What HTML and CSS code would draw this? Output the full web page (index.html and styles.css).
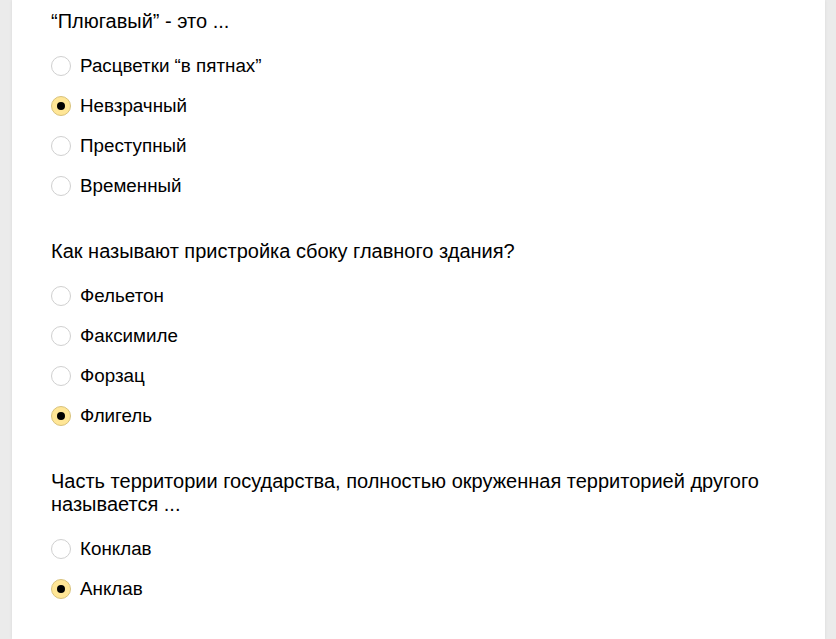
FILE: index.html
```html
<!DOCTYPE html>
<html lang="ru">
<head>
    <meta charset="UTF-8">
    <meta name="viewport" content="width=device-width, initial-scale=1.0">
    <title>Тест</title>
    <link rel="stylesheet" href="styles.css">
</head>
<body>
    <div class="card">
        <div class="question">
            <div class="question-title">“Плюгавый” - это ...</div>
            <label class="option"><span class="radio"></span>Расцветки “в пятнах”</label>
            <label class="option"><span class="radio checked"></span>Невзрачный</label>
            <label class="option"><span class="radio"></span>Преступный</label>
            <label class="option"><span class="radio"></span>Временный</label>
        </div>

        <div class="question">
            <div class="question-title">Как называют пристройка сбоку главного здания?</div>
            <label class="option"><span class="radio"></span>Фельетон</label>
            <label class="option"><span class="radio"></span>Факсимиле</label>
            <label class="option"><span class="radio"></span>Форзац</label>
            <label class="option"><span class="radio checked"></span>Флигель</label>
        </div>

        <div class="question">
            <div class="question-title">Часть территории государства, полностью окруженная территорией другого называется ...</div>
            <label class="option"><span class="radio"></span>Конклав</label>
            <label class="option"><span class="radio checked"></span>Анклав</label>
        </div>
    </div>
</body>
</html>
```

FILE: styles.css
```css
body {
    margin: 0;
    background-color: #ebebeb;
    font-family: Arial, 'Liberation Sans', sans-serif;
    color: #000;
}
.card {
    box-sizing: border-box;
    margin: 0 11px 0 12px;
    padding: 10px 30px 20px 39px;
    min-height: 100vh;
    background-color: #fff;
    box-shadow: 0 0 3px rgba(0, 0, 0, 0.08);
}
.question {
    margin-bottom: 42px;
}
.question:last-child {
    margin-bottom: 0;
}
.question-title {
    font-size: 20px;
    line-height: 23px;
    margin-bottom: 21px;
}
.option {
    display: flex;
    align-items: center;
    gap: 9px;
    height: 24px;
    margin-bottom: 16px;
    font-size: 18.8px;
    cursor: pointer;
}
.option:last-child {
    margin-bottom: 0;
}
.radio {
    position: relative;
    width: 18px;
    height: 18px;
    border: 1px solid #d0d0d0;
    border-radius: 50%;
    background-color: #fff;
    flex-shrink: 0;
}
.radio.checked {
    background-color: #ffe696;
    border-color: #d8c27c;
}
.radio.checked::after {
    content: '';
    position: absolute;
    top: 5px;
    left: 5px;
    width: 8px;
    height: 8px;
    border-radius: 50%;
    background-color: #000;
}
```
